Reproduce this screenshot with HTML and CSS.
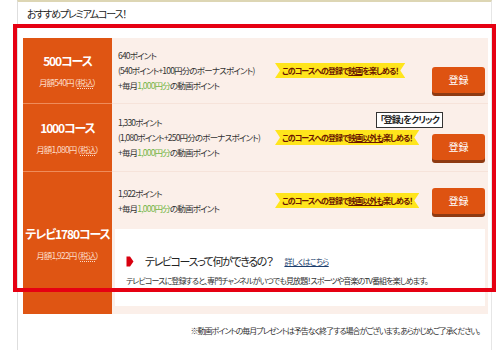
FILE: index.html
```html
<!DOCTYPE html>
<html lang="ja">
<head>
  <meta charset="UTF-8">
  <title>おすすめプレミアムコース</title>
  <link rel="stylesheet" href="styles.css">
</head>
<body>
  <div class="page">
    <h2 class="title">おすすめプレミアムコース！</h2>

    <div class="courses">
      <div class="course row-1">
        <div class="course-name">
          <p class="name">500コース</p>
          <p class="price">月額540円（<span class="tax">税込</span>）</p>
        </div>
        <div class="course-body">
          <div class="course-main">
            <div class="points">
              <p>640ポイント</p>
              <p>(540ポイント+100円分のボーナスポイント)</p>
              <p>+毎月<span class="green">1,000円分</span>の動画ポイント</p>
            </div>
            <div class="ribbon">このコースへの登録で<u>映画</u>を楽しめる！</div>
            <a class="btn low" href="#">登録</a>
          </div>
        </div>
      </div>

      <div class="course row-2">
        <div class="course-name">
          <p class="name">1000コース</p>
          <p class="price">月額1,080円（<span class="tax">税込</span>）</p>
        </div>
        <div class="course-body">
          <div class="course-main">
            <div class="points">
              <p>1,330ポイント</p>
              <p>(1,080ポイント+250円分のボーナスポイント)</p>
              <p>+毎月<span class="green">1,000円分</span>の動画ポイント</p>
            </div>
            <div class="ribbon">このコースへの登録で<u>映画以外も</u>楽しめる！</div>
            <a class="btn low" href="#">登録</a>
          </div>
        </div>
      </div>

      <div class="course row-3">
        <div class="course-name">
          <p class="name">テレビ1780コース</p>
          <p class="price">月額1,922円（<span class="tax">税込</span>）</p>
        </div>
        <div class="course-body">
          <div class="course-main">
            <div class="points">
              <p>1,922ポイント</p>
              <p>+毎月<span class="green">1,000円分</span>の動画ポイント</p>
            </div>
            <div class="ribbon">このコースへの登録で<u>映画以外も</u>楽しめる！</div>
            <a class="btn" href="#">登録</a>
          </div>

          <div class="tv-box">
            <div class="tv-head">
              <svg class="flag" width="8" height="11" viewBox="0 0 8 11">
                <path d="M0.5 0.5 H4 L7.5 5.5 L4 10.5 H0.5 Z" fill="#d8000f"/>
              </svg>
              <span class="tv-title">テレビコースって何ができるの？</span>
              <a class="more" href="#">詳しくはこちら</a>
            </div>
            <p class="tv-text">テレビコースに登録すると、専門チャンネルがいつでも見放題！スポーツや音楽のTV番組を楽しめます。</p>
          </div>
        </div>
      </div>

      <div class="tip">「登録」をクリック</div>
    </div>

    <p class="note">※動画ポイントの毎月プレゼントは予告なく終了する場合がございます。あらかじめご了承ください。</p>
  </div>

  <div class="highlight"></div>
</body>
</html>
```

FILE: styles.css
```css
body {
  margin: 0;
  background: #fff;
  color: #333;
  font-family: "Noto Sans CJK JP", "Noto Sans", sans-serif;
  font-feature-settings: "palt";
  overflow: hidden;
}

p {
  margin: 0;
}

.page {
  margin-left: 17px;
  width: 473px;
  height: 360px;
  border-left: 1px solid #dedede;
  border-right: 1px solid #e6e6e6;
  border-top: 2px solid #ddd6b4;
  padding-top: 4px;
}

.title {
  margin: 0 0 16px 0;
  padding-left: 9px;
  font-size: 10px;
  line-height: 16px;
  font-weight: normal;
  color: #222;
  letter-spacing: -1.2px;
}

.courses {
  position: relative;
  margin: 0 3px 0 5px;
}

.course {
  display: flex;
  border-bottom: 1px solid #f6e3da;
}

.row-1 { height: 65px; }
.row-2 { height: 67px; }
.row-3 { height: 142px; border-bottom: none; }

.course-name {
  width: 89px;
  flex: none;
  background: #df5513;
  color: #fff;
  display: flex;
  flex-direction: column;
  justify-content: center;
  align-items: center;
  gap: 7px;
  box-shadow: 0 1px 0 #ef8c5a;
}

.row-3 .course-name {
  box-shadow: none;
}

.name {
  font-size: 12px;
  line-height: 16px;
  font-weight: bold;
  letter-spacing: -1.1px;
  white-space: nowrap;
}

.price {
  font-size: 8.5px;
  line-height: 12px;
  color: #fcdcc8;
  letter-spacing: -0.8px;
  white-space: nowrap;
}

.tax {
  border-bottom: 1px dotted #fcdcc8;
}

.course-body {
  flex: 1;
  background: #fbefe9;
  display: flex;
  flex-direction: column;
}

.course-main {
  flex: 1;
  display: flex;
  align-items: center;
  padding-left: 6px;
}

.row-3 .course-main {
  flex: none;
  height: 57px;
}

.points {
  width: 157px;
  flex: none;
  font-size: 8.5px;
  line-height: 15px;
  letter-spacing: -0.8px;
  white-space: nowrap;
}

.green {
  color: #72b544;
}

.ribbon {
  height: 15px;
  padding: 0 7px;
  background: #ffe51c;
  color: #6a1500;
  font-size: 8px;
  line-height: 15px;
  font-weight: bold;
  letter-spacing: -1px;
  white-space: nowrap;
  clip-path: polygon(0 0, 100% 0, calc(100% - 5px) 50%, 100% 100%, 0 100%, 5px 50%);
}

.ribbon u {
  text-decoration-thickness: 1px;
}

.btn {
  margin-left: auto;
  margin-right: 3px;
  width: 53px;
  height: 26px;
  background: #de5311;
  border-radius: 3px;
  box-shadow: 0 3px 0 #8e3a12;
  color: #fff;
  font-size: 10px;
  text-decoration: none;
  display: flex;
  justify-content: center;
  align-items: center;
}

.btn.low {
  margin-top: 18px;
}

.tv-box {
  margin: 0 3px 8px 3px;
  flex: 1;
  background: #fff;
  padding: 24px 0 0 11px;
}

.tv-head {
  display: flex;
  align-items: center;
  height: 16px;
}

.flag {
  margin-right: 11px;
}

.tv-title {
  font-size: 11px;
  color: #222;
  letter-spacing: -1.4px;
}

.more {
  margin-left: 12px;
  font-size: 8px;
  color: #1d3f6e;
  letter-spacing: -0.7px;
}

.tv-text {
  margin-top: 6px;
  font-size: 8px;
  line-height: 12px;
  letter-spacing: -0.9px;
  white-space: nowrap;
}

.tip {
  position: absolute;
  left: 353px;
  top: 74px;
  height: 14px;
  padding: 0 3px;
  background: #fff;
  border: 1px solid #333;
  color: #222;
  font-size: 9px;
  line-height: 14px;
  font-weight: bold;
  letter-spacing: -0.9px;
  white-space: nowrap;
}

.note {
  margin-top: 11px;
  padding-right: 11px;
  text-align: right;
  font-size: 8px;
  line-height: 12px;
  letter-spacing: -1px;
  white-space: nowrap;
}

.highlight {
  position: absolute;
  left: 13px;
  top: 24px;
  width: 483px;
  height: 268px;
  box-sizing: border-box;
  border: 4px solid #e60012;
}
```
